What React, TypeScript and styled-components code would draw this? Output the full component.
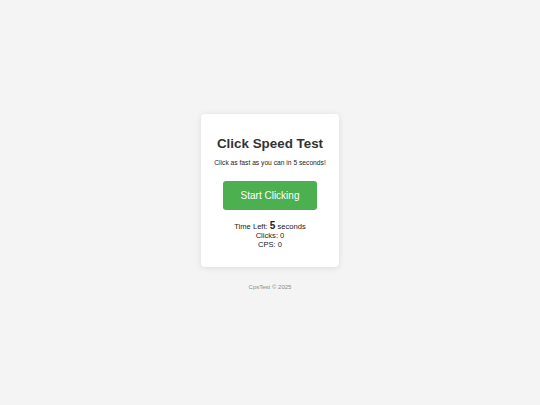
import React from 'react';
import styled, { createGlobalStyle } from 'styled-components';

const GlobalStyle = createGlobalStyle`
  html, body {
    margin: 0;
    padding: 0;
    background: #f4f4f4;
    font-family: "Liberation Sans", Arial, sans-serif;
  }
`;

const Page = styled.div`
  min-height: 100vh;
  display: flex;
  flex-direction: column;
  align-items: center;
  justify-content: center;
`;

const Card = styled.div`
  width: 138px;
  box-sizing: border-box;
  padding: 22px 10px 18px;
  background: #fff;
  border-radius: 4px;
  box-shadow: 0 1px 6px rgba(0, 0, 0, 0.1);
  display: flex;
  flex-direction: column;
  align-items: center;
  text-align: center;
  color: #333;
`;

const Title = styled.h1`
  margin: 0 0 7px;
  font-size: 13.4px;
  line-height: 16px;
  font-weight: bold;
`;

const Subtitle = styled.p`
  margin: 0 0 14px;
  font-size: 6.7px;
  line-height: 8px;
  color: #222;
`;

const StartButton = styled.button`
  width: 94px;
  height: 28.5px;
  border: none;
  border-radius: 3px;
  background: #4caf50;
  color: #fff;
  font-family: inherit;
  font-size: 10px;
  cursor: pointer;
  margin-bottom: 11px;
`;

const Stat = styled.div`
  font-size: 7.6px;
  line-height: 9px;
  color: #222;
`;

const Big = styled.span`
  font-size: 10px;
  font-weight: bold;
  line-height: 9px;
`;

const Footer = styled.footer`
  margin-top: 17px;
  font-size: 6px;
  line-height: 7px;
  color: #8a8a8a;
`;

export default function App() {
  return (
    <>
      <GlobalStyle />
      <Page>
        <Card>
          <Title>Click Speed Test</Title>
          <Subtitle>Click as fast as you can in 5 seconds!</Subtitle>
          <StartButton>Start Clicking</StartButton>
          <Stat>
            Time Left: <Big>5</Big> seconds
          </Stat>
          <Stat>Clicks: 0</Stat>
          <Stat>CPS: 0</Stat>
        </Card>
        <Footer>CpsTest © 2025</Footer>
      </Page>
    </>
  );
}
